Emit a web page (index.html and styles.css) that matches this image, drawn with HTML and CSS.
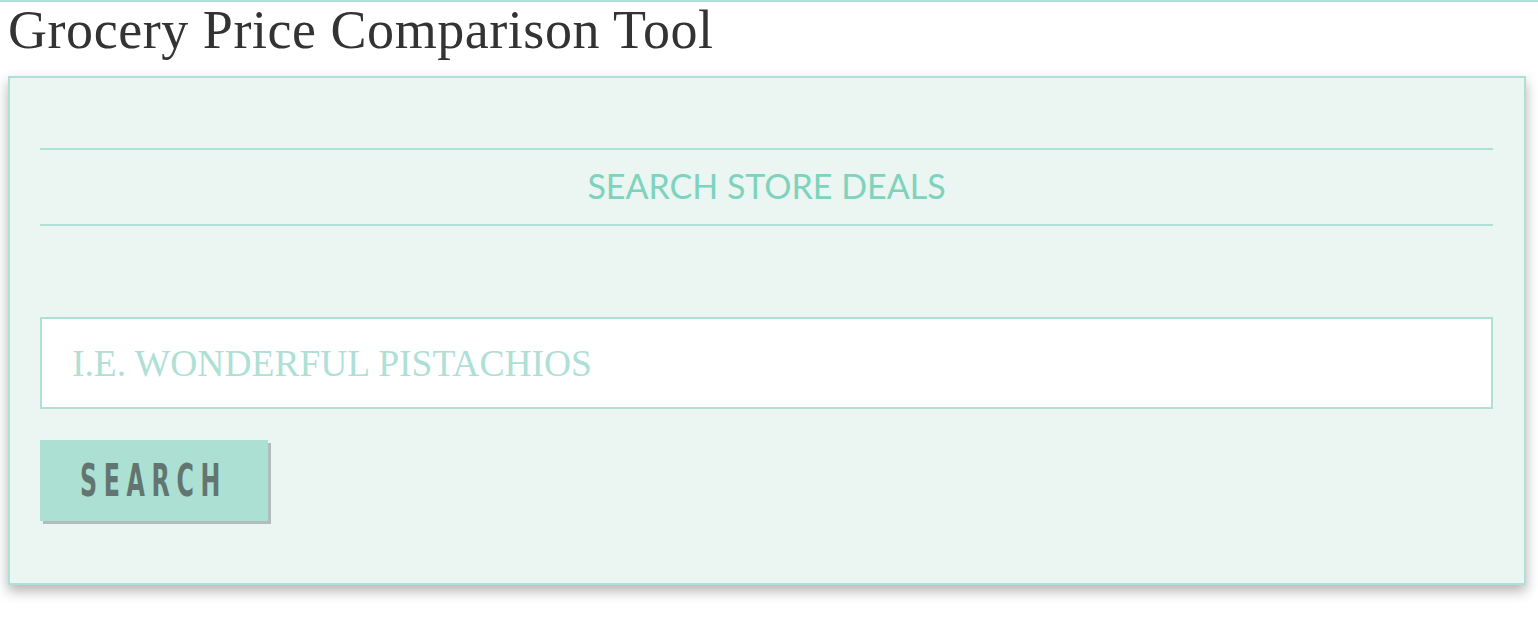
FILE: index.html
```html
<!DOCTYPE html>
<html lang="en">

<head>
    <meta charset="UTF-8">
    <meta name="viewport" content="width=device-width, initial-scale=1.0">
    <title>Grocery Price Comparison Tool</title>
    <link rel="stylesheet" href="styles.css">
</head>

<body>
    <h1 class="title">Grocery Price Comparison Tool</h1>
    <section class="panel">
        <h2 class="panel-heading">Search Store Deals</h2>
        <form class="search-form">
            <input type="text" class="search-input" placeholder="i.e. wonderful pistachios">
            <button type="submit" class="search-button"><span class="search-label">Search</span></button>
        </form>
    </section>
</body>

</html>
```

FILE: styles.css
```css
body {
    margin: 0;
    padding: 0 0 40px;
    border-top: 2px solid #aee0d5;
    font-family: "Liberation Serif", serif;
    background-color: #fff;
}

.title {
    margin: 0;
    padding: 0 8px;
    height: 74px;
    line-height: 56px;
    font-size: 54px;
    font-weight: normal;
    letter-spacing: 0.55px;
    color: #333;
}

.panel {
    margin: 0 12px 0 8px;
    padding: 70px 31px 62px 30px;
    background-color: #ebf5f2;
    border: 2px solid #aee0d5;
    box-shadow: 0 6px 12px rgba(0, 0, 0, 0.3);
}

.panel-heading {
    margin: 0;
    height: 74px;
    line-height: 72px;
    border-top: 2px solid #aee0d5;
    border-bottom: 2px solid #aee0d5;
    text-align: center;
    text-transform: uppercase;
    font-family: Lato, sans-serif;
    font-size: 34px;
    font-weight: normal;
    color: #7dd3bc;
}

.search-form {
    display: flex;
    flex-direction: column;
    align-items: flex-start;
    gap: 31px;
    padding-top: 91px;
}

.search-input {
    box-sizing: border-box;
    width: 100%;
    height: 92px;
    padding: 0 30px;
    border: 2px solid #aee0d5;
    background-color: #fff;
    font-family: "Liberation Serif", serif;
    font-size: 37.5px;
    text-transform: uppercase;
    outline: none;
}

.search-input::placeholder {
    color: #aee0d5;
}

.search-button {
    width: 228px;
    height: 81px;
    padding: 0 0 0 40px;
    border: none;
    background-color: #abe0d2;
    box-shadow: 3px 3px 0 #b3bcbc;
    color: #627570;
    text-align: left;
    white-space: nowrap;
    overflow: visible;
    cursor: pointer;
}

.search-label {
    display: inline-block;
    transform: scaleX(0.6);
    transform-origin: left center;
    font-family: "DejaVu Sans Condensed", "DejaVu Sans", sans-serif;
    font-stretch: condensed;
    font-size: 44px;
    font-weight: bold;
    letter-spacing: 11px;
    text-transform: uppercase;
}
```
